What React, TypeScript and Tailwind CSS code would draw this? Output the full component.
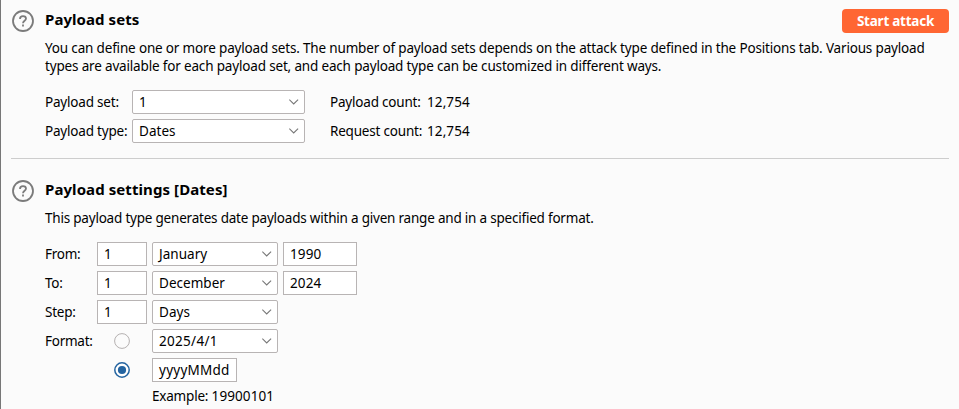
import React from "react";

function HelpIcon() {
  return (
    <svg className="block h-[22px] w-[22px] shrink-0" viewBox="0 0 22 22" fill="none" stroke="#7b7b7b" strokeWidth="1.8">
      <circle cx="11" cy="11" r="10" />
      <path d="M8 8.9C8 7 9.2 6.1 11 6.1c1.800 0 3 .9 3 2.500 0 2.200-3 2.100-3 4.600" />
      <path d="M11 14.600v1.900" />
    </svg>
  );
}

function Select({ value, className = "" }: { value: string; className?: string }) {
  return (
    <div className={`flex h-6 shrink-0 items-center justify-between rounded-[2px] border border-[#b8b4b4] bg-white pl-1.5 pr-[5px] tracking-[0.03px] ${className}`}>
      <span>{value}</span>
      <svg className="block h-[6px] w-[10px]" viewBox="0 0 10 6" fill="none" stroke="#777" strokeWidth="1.100">
        <path d="M.3.6 4.700 5 9.100.6" />
      </svg>
    </div>
  );
}

function Input({ value, className = "" }: { value: string; className?: string }) {
  return <div className={`flex h-6 shrink-0 items-center border border-[#b8b4b4] bg-white pl-1.5 tracking-[0.12px] ${className}`}>{value}</div>;
}

function Radio({ checked = false }: { checked?: boolean }) {
  return (
    <div className="mr-[5px] flex h-6 w-[50px] shrink-0 items-center justify-center">
      <svg className="block h-4 w-4" viewBox="0 0 16 16" fill="none">
        {checked ? (
          <>
            <circle cx="8" cy="8" r="7.200" stroke="#2464a0" strokeWidth="1.500" fill="#fff" />
            <circle cx="8" cy="8" r="4.100" fill="#2464a0" />
          </>
        ) : (
          <circle cx="8" cy="8" r="7.400" stroke="#b4b0b0" strokeWidth="1" />
        )}
      </svg>
    </div>
  );
}

function Row({ label, children }: { label: string; children: React.ReactNode }) {
  return (
    <div className="flex h-6 items-center">
      <span className="w-[52px] shrink-0 tracking-[-0.25px]">{label}</span>
      {children}
    </div>
  );
}

function PayloadRow({ label, value, countLabel, count }: { label: string; value: string; countLabel: string; count: string }) {
  return (
    <div className="flex h-6 items-center">
      <span className="w-[87px] shrink-0 tracking-[-0.2px]">{label}</span>
      <Select value={value} className="w-[173px]" />
      <span className="ml-[25px] w-[97px] tracking-[-0.2px]">{countLabel}</span>
      <span className="tracking-[0.1px]">{count}</span>
    </div>
  );
}

export default function App() {
  return (
    <div className="h-[409px] w-[959px] overflow-hidden whitespace-nowrap border-l border-[#777] bg-[#fbfbfb] pl-[10px] pr-[10px] font-['Noto_Sans','Open_Sans',sans-serif] text-[13.5px] leading-[18px] text-black">
      <section className="flex h-[158px] gap-[11px] pt-[9px]">
        <div className="w-[23px] pl-px pt-px">
          <HelpIcon />
        </div>
        <div className="min-w-0 flex-1">
          <div className="flex h-6 items-start justify-between">
            <h2 className="text-[15px] font-bold leading-[20px] tracking-[0.06px]">Payload sets</h2>
            <button className="h-6 w-[107px] rounded-[4px] bg-[#ff6633] text-[13.5px] font-bold leading-6 tracking-[-0.24px] text-white">Start attack</button>
          </div>
          <p className="mt-[6px] tracking-[-0.167px]">
            <span className="block w-max">You can define one or more payload sets. The number of payload sets depends on the attack type defined in the Positions tab. Various payload</span>
            <span className="block w-max">types are available for each payload set, and each payload type can be customized in different ways.</span>
          </p>
          <div className="mt-[15px] flex flex-col gap-[5px]">
            <PayloadRow label="Payload set:" value="1" countLabel="Payload count:" count="12,754" />
            <PayloadRow label="Payload type:" value="Dates" countLabel="Request count:" count="12,754" />
          </div>
        </div>
      </section>
      <div className="h-px bg-[#cdcdcd]" />
      <section className="flex gap-[11px] pt-[20px]">
        <div className="w-[23px] pl-px pt-px">
          <HelpIcon />
        </div>
        <div className="min-w-0 flex-1">
          <h2 className="w-max text-[15px] font-bold leading-[20px] tracking-[0.08px]">Payload settings [Dates]</h2>
          <p className="mt-[10px] w-max tracking-[-0.21px]">This payload type generates date payloads within a given range and in a specified format.</p>
          <div className="mt-[15px] flex flex-col gap-[5px]">
            <Row label="From:">
              <Input value="1" className="w-[50px]" />
              <Select value="January" className="mx-[5px] w-[126px]" />
              <Input value="1990" className="w-[74px]" />
            </Row>
            <Row label="To:">
              <Input value="1" className="w-[50px]" />
              <Select value="December" className="mx-[5px] w-[126px]" />
              <Input value="2024" className="w-[74px]" />
            </Row>
            <Row label="Step:">
              <Input value="1" className="w-[50px]" />
              <Select value="Days" className="ml-[5px] w-[126px]" />
            </Row>
            <Row label="Format:">
              <Radio />
              <Select value="2025/4/1" className="w-[126px] tracking-[0.3px]" />
            </Row>
            <Row label="">
              <Radio checked />
              <Input value="yyyyMMdd" className="w-[85px] tracking-[0.25px]" />
            </Row>
          </div>
          <div className="ml-[107px] mt-[5px]"><span className="tracking-[-0.2px]">Example: </span><span className="tracking-[0.1px]">19900101</span></div>
        </div>
      </section>
    </div>
  );
}
